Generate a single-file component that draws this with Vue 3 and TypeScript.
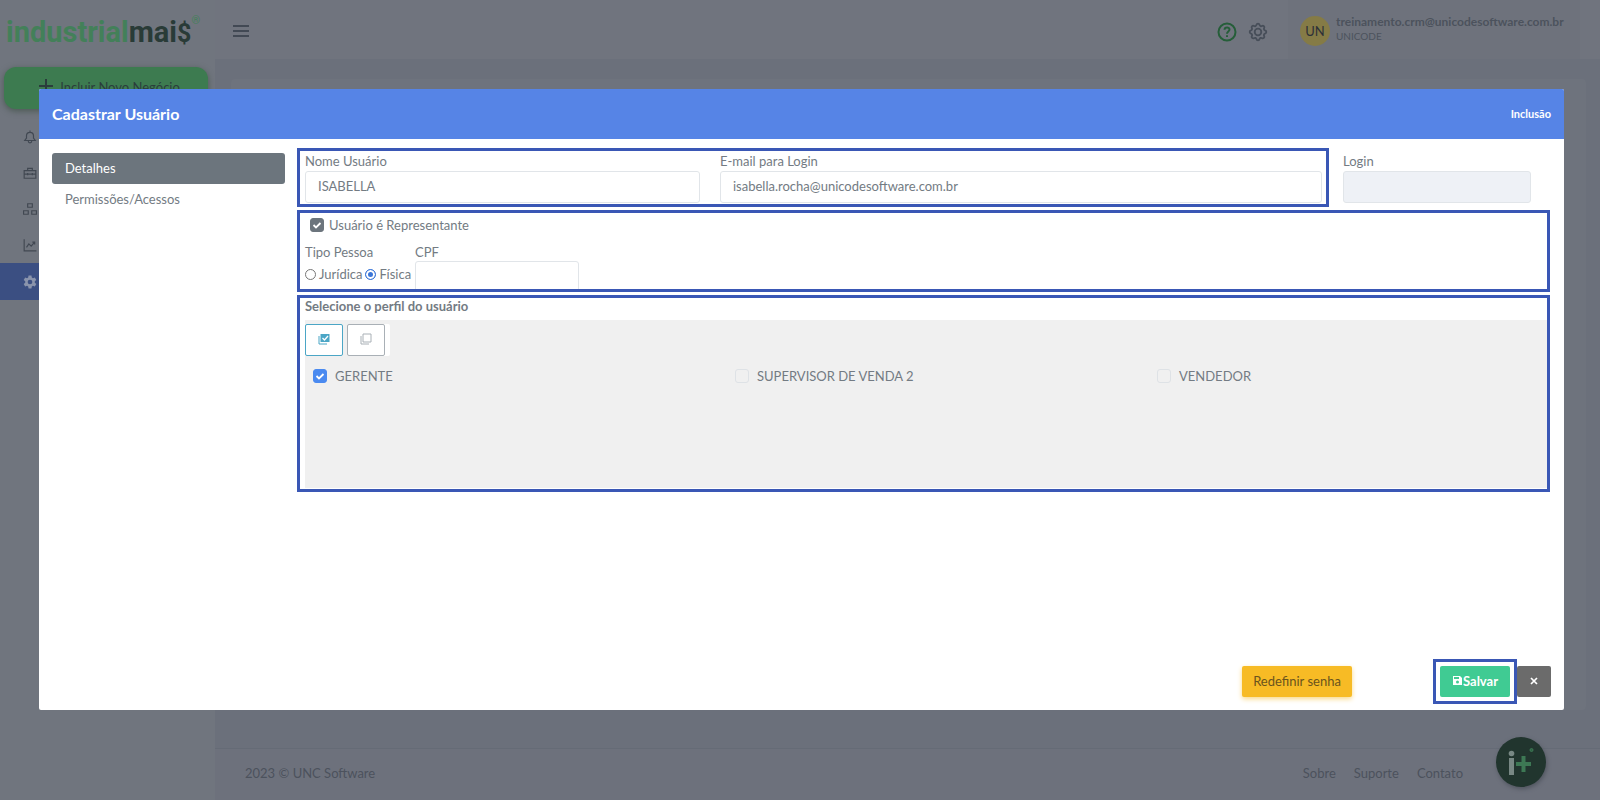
<script setup lang="ts">
import { ref } from 'vue'

interface Profile { name: string; checked: boolean }

const nome = ref('ISABELLA')
const email = ref('isabella.rocha@unicodesoftware.com.br')
const login = ref('')
const cpf = ref('')
const representante = ref(true)
const tipoPessoa = ref('fisica')
const profiles = ref<Profile[]>([
  { name: 'GERENTE', checked: true },
  { name: 'SUPERVISOR DE VENDA 2', checked: false },
  { name: 'VENDEDOR', checked: false },
])
const footerLinks = ['Sobre', 'Suporte', 'Contato']

function setAll(value: boolean) {
  profiles.value.forEach((p) => { p.checked = value })
}
</script>

<template>
  <div class="app">
    <aside class="sidebar">
      <a class="logo" href="#"><span class="logo-light">industrial</span><span class="logo-dark">mai<span class="logo-money">$</span></span><sup>®</sup></a>
      <button class="new-deal" type="button">
        <svg width="16" height="16" viewBox="0 0 16 16"><path d="M8 1v14M1 8h14" /></svg>
        <span>Incluir Novo Negócio</span>
      </button>
      <nav class="menu">
        <a href="#" aria-label="Notificações"><svg viewBox="0 0 24 24"><path d="M3 18h18l-3-4v-4a6 6 0 0 0-12 0v4zM12 4V1M9 19a3 3 0 0 0 6 0" /></svg></a>
        <a href="#" aria-label="Negócios"><svg viewBox="0 0 24 24"><path d="M2 8h20v13H2zM8 8V4h8v4M2 14h20M8 12v4M16 12v4" /></svg></a>
        <a href="#" aria-label="Organização"><svg viewBox="0 0 24 24"><path d="M8 3h8v6H8zM1 15h8v6H1zM15 15h8v6h-8z" /></svg></a>
        <a href="#" aria-label="Relatórios"><svg viewBox="0 0 24 24"><path d="M2 2v20h21M6 16l4-6 4 4 6-7M16 7h4v4" /></svg></a>
        <a href="#" class="active" aria-label="Configurações"><svg viewBox="0 0 24 24"><path class="solid" fill-rule="evenodd" d="M9.5 1h5l.6 3.3 2 1.2 3.2-1.2 2.5 4.4-2.6 2.1v2.4l2.6 2.1-2.5 4.4-3.2-1.2-2 1.2-.6 3.3h-5l-.6-3.3-2-1.2-3.2 1.2-2.5-4.4 2.6-2.1v-2.4L1.2 8.7l2.5-4.4 3.2 1.2 2-1.2zM12 8a4 4 0 1 0 0 8 4 4 0 0 0 0-8z" /></svg></a>
      </nav>
    </aside>

    <div class="page">
      <header class="topbar">
        <button class="icon-btn burger" type="button" aria-label="Menu">
          <svg width="16" height="12" viewBox="0 0 16 12"><path d="M0 1h16M0 6h16M0 11h16" /></svg>
        </button>
        <div class="top-actions">
          <button class="icon-btn help" type="button" aria-label="Ajuda">
            <svg width="20" height="20" viewBox="0 0 20 20"><circle cx="10" cy="10" r="8.5" /><path d="M7.5 7.8C7.6 4.6 12.6 4.7 12.5 7.6 12.5 9.5 10 9.5 10 11.7M10 13.3v1.7" /></svg>
          </button>
          <button class="icon-btn gear" type="button" aria-label="Configurações">
            <svg width="22" height="22" viewBox="0 0 24 24"><circle cx="12" cy="12" r="3.6" /><path d="M10.3 4.3c.4-1.8 3-1.8 3.4 0a1.7 1.7 0 0 0 2.6 1.1c1.5-.9 3.3.8 2.4 2.4a1.7 1.7 0 0 0 1 2.5c1.8.4 1.8 3 0 3.4a1.7 1.7 0 0 0-1 2.6c.9 1.5-.9 3.3-2.4 2.4a1.7 1.7 0 0 0-2.6 1c-.4 1.8-3 1.8-3.4 0a1.7 1.7 0 0 0-2.6-1c-1.5.9-3.3-.9-2.4-2.4a1.7 1.7 0 0 0-1-2.6c-1.8-.4-1.8-3 0-3.4a1.7 1.7 0 0 0 1-2.5c-.9-1.6.9-3.3 2.4-2.4a1.7 1.7 0 0 0 2.6-1.1z" /></svg>
          </button>
          <div class="account">
            <span class="avatar">UN</span>
            <div>
              <div class="account-mail">treinamento.crm@unicodesoftware.com.br</div>
              <div class="account-org">UNICODE</div>
            </div>
          </div>
        </div>
      </header>
      <main class="content"><div class="card"></div></main>
      <footer class="footer">
        <span>2023 © UNC Software</span>
        <nav><a v-for="l in footerLinks" :key="l" href="#">{{ l }}</a></nav>
      </footer>
    </div>

    <button class="chat" type="button" aria-label="Industrial Mais">
      <svg width="50" height="50" viewBox="0 0 50 50">
        <circle cx="15.5" cy="16.5" r="2.8" fill="#788884" />
        <path d="M13 21h5v17h-5z" fill="#788884" />
        <path d="M20 25h5.5v-6h4v6H35v4h-5.5v6h-4v-6H20z" fill="#3d7854" />
        <circle cx="35.5" cy="13" r="1.5" fill="#2f6044" stroke="#3d7854" />
      </svg>
    </button>

    <div class="overlay">
      <section class="modal" role="dialog" aria-labelledby="modal-title">
        <header class="modal-head">
          <h1 id="modal-title">Cadastrar Usuário</h1>
          <span>Inclusão</span>
        </header>
        <div class="modal-body">
          <nav class="tabs">
            <a href="#" class="current">Detalhes</a>
            <a href="#">Permissões/Acessos</a>
          </nav>
          <form class="form" @submit.prevent>
            <div class="top-row">
              <div class="frame identity">
                <div class="field">
                  <label for="nome">Nome Usuário</label>
                  <input id="nome" v-model="nome" type="text" />
                </div>
                <div class="field">
                  <label for="email">E-mail para Login</label>
                  <input id="email" v-model="email" type="text" />
                </div>
              </div>
              <div class="field login">
                <label for="login">Login</label>
                <input id="login" v-model="login" type="text" disabled />
              </div>
            </div>

            <div class="frame rep">
              <label class="check rep-check"><input v-model="representante" class="grey" type="checkbox" />Usuário é Representante</label>
              <div class="rep-row">
                <div class="field">
                  <span id="tipo">Tipo Pessoa</span>
                  <div class="radios" role="radiogroup" aria-labelledby="tipo">
                    <label><input v-model="tipoPessoa" type="radio" value="juridica" />Jurídica</label>
                    <label><input v-model="tipoPessoa" type="radio" value="fisica" />Física</label>
                  </div>
                </div>
                <div class="field cpf">
                  <label for="cpf">CPF</label>
                  <input id="cpf" v-model="cpf" type="text" />
                </div>
              </div>
            </div>

            <div class="frame profile">
              <h2>Selecione o perfil do usuário</h2>
              <div class="profile-box">
                <div class="toolbar">
                  <button class="all" type="button" aria-label="Marcar todos" @click="setAll(true)">
                    <svg width="12" height="12" viewBox="0 0 12 12"><path d="M1 3v8h8" fill="none" stroke="currentColor" /><path d="M2.5 1h9v8h-9z" fill="currentColor" /><path d="M4.5 5l2 2 3.5-4" fill="none" stroke="#fff" stroke-width="1.3" /></svg>
                  </button>
                  <button class="none" type="button" aria-label="Desmarcar todos" @click="setAll(false)">
                    <svg width="12" height="12" viewBox="0 0 12 12" fill="none" stroke="currentColor"><path d="M1 3v8h8M3 1h8v8H3z" /></svg>
                  </button>
                </div>
                <div class="profiles">
                  <label v-for="p in profiles" :key="p.name" class="check"><input v-model="p.checked" type="checkbox" />{{ p.name }}</label>
                </div>
              </div>
            </div>
          </form>
        </div>
        <footer class="modal-foot">
          <button class="reset" type="button">Redefinir senha</button>
          <div class="save-frame">
            <button class="save" type="button">
              <svg width="11" height="11" viewBox="0 0 11 11"><path fill="#fff" fill-rule="evenodd" d="M1 1h7l2 2v7H1zM2 2v2h5V2zM5.5 5.500a1.500 1.500 0 1 0 0 3 1.500 1.500 0 0 0 0-3z" /></svg>Salvar
            </button>
          </div>
          <button class="close" type="button" aria-label="Fechar">
            <svg width="8" height="8" viewBox="0 0 8 8"><path d="M1 1l6 6M7 1L1 7" stroke="#fff" stroke-width="1.7" /></svg>
          </button>
        </footer>
      </section>
    </div>
  </div>
</template>

<style>
body { margin: 0; background: #6d717c; }
</style>

<style scoped>
* { box-sizing: border-box; }
.app {
  position: relative;
  display: flex;
  min-height: 100vh;
  font-family: Lato, "Open Sans", sans-serif;
  font-size: 13px;
  line-height: 18px;
  color: #737b83;
}
button, input { font: inherit; color: inherit; }
button { padding: 0; cursor: pointer; }
a { color: inherit; text-decoration: none; }
h1, h2 { margin: 0; }

.sidebar { width: 215px; flex: none; background: #70757e; }
.logo { display: flex; height: 59px; padding: 4px 0 0 6px; align-items: center; font: bold 29px Roboto, sans-serif; }
.logo-light { color: #438059; }
.logo-dark { color: #293b37; }
.logo-money { font-size: 25px; }
.logo sup { align-self: flex-start; padding-top: 10px; font-size: 11px; font-weight: 400; color: #438059; }
.new-deal {
  display: flex; justify-content: center; align-items: flex-start; gap: 6px;
  width: 204px; height: 42px; margin: 8px 0 0 4px; padding: 11px 0 0 6px;
  border: 0; border-radius: 12px; background: #3d7b50; color: #2b3d3c;
  box-shadow: 0 2px 6px #4b5953;
}
.new-deal svg { fill: none; stroke: currentColor; stroke-width: 2; }
.menu { display: flex; flex-direction: column; margin-top: 10px; }
.menu a { display: flex; align-items: center; height: 36px; padding-left: 23px; color: #414852; }
.menu svg { width: 14px; height: 14px; fill: none; stroke: currentColor; stroke-width: 2; }
.menu .solid { fill: currentColor; stroke: none; }
.menu .active { height: 37px; background: #3b4f82; color: #8a94ac; }

.page { display: flex; flex-direction: column; flex: 1; min-width: 0; background: #6b707b; }
.topbar { display: flex; justify-content: space-between; height: 59px; padding: 0 20px 0 18px; background: #70747e; }
.icon-btn { display: flex; align-items: center; border: 0; background: none; }
.icon-btn svg { fill: none; stroke: currentColor; stroke-width: 2; }
.burger { color: #333b47; padding-top: 2px; }
.burger svg { stroke-width: 1.5; }
.top-actions { display: flex; align-items: stretch; gap: 10px; }
.help { color: #255e39; padding-top: 4px; }
.gear { color: #474e59; padding-top: 5px; }
.icon-btn.gear svg { stroke-width: 2; }
.account { display: flex; align-items: center; gap: 6px; width: 292px; margin-left: 9px; padding: 2px 0 0 12px; background: #6e727c; color: #4c525d; }
.avatar { display: flex; align-items: center; justify-content: center; width: 30px; height: 30px; border-radius: 50%; background: #857b46; color: #2d3037; }
.account > div { padding-bottom: 5px; }
.account-mail { font-size: 12px; line-height: 16px; font-weight: 700; }
.account-org { font-size: 10px; line-height: 12px; }
.content { display: flex; flex: 1; padding: 20px 14px 38px 16px; }
.card { flex: 1; background: #6e737d; border-radius: 4px; }
.footer { display: flex; justify-content: space-between; align-items: center; height: 52px; padding: 0 137px 4px 30px; border-top: 1px solid #656b76; background: #6d717c; color: #4c525d; }
.footer nav { display: flex; gap: 18px; }

.chat { position: absolute; right: 54px; bottom: 13px; width: 50px; height: 50px; border: 0; border-radius: 50%; background: #21352e; box-shadow: 1px 2px 4px #50555f; }

.overlay { position: absolute; inset: 0; display: flex; padding: 89px 36px 90px 39px; pointer-events: none; }
.modal { display: flex; flex-direction: column; flex: 1; min-width: 0; background: #fff; border-radius: 2px; overflow: hidden; pointer-events: auto; }
.modal-head { display: flex; align-items: center; justify-content: space-between; height: 50px; padding: 0 13px; background: #5684e6; color: #fff; font-size: 11px; font-weight: 700; }
.modal-head h1 { font-size: 16px; }
.modal-body { display: flex; flex: 1; gap: 12px; padding: 9px 14px 0 13px; }
.tabs { width: 233px; flex: none; padding-top: 5px; }
.tabs a { display: flex; align-items: center; height: 31px; padding: 0 13px 2px; border-radius: 3px; }
.tabs .current { background: #6c757d; color: #fff; }
.form { flex: 1; min-width: 0; display: flex; flex-direction: column; gap: 3px; }
.top-row { display: flex; }
.frame { border: 3px solid #3a57b5; padding: 0 5px; }
.identity { display: grid; grid-template-columns: 395fr 602fr; gap: 20px; height: 59px; flex: 1; padding: 1px 4px 0 5px; }
.field { display: flex; flex-direction: column; gap: 1px; min-width: 0; }
.field input[type="text"] { width: 100%; height: 32px; padding: 0 12px 2px; border: 1px solid #e1e5e9; border-radius: 3px; background: #fff; }
.field input:disabled { background: #eef1f6; }
.login { width: 188px; margin: 4px 19px 0 14px; }
.rep { height: 82px; overflow: hidden; }
.check { display: flex; align-items: center; }
.check input, .radios input { appearance: none; flex: none; margin: 0; border: 1px solid #dee2e6; background: transparent center / 10px no-repeat; }
.check input { width: 14px; height: 14px; margin-right: 8px; border-radius: 3px; }
.check input:checked { border-color: #4a8af0; background-color: #4a8af0; background-image: url("data:image/svg+xml,%3Csvg xmlns='http://www.w3.org/2000/svg' viewBox='0 0 10 10'%3E%3Cpath d='M1.5 5l2.5 2.5L8.5 3' fill='none' stroke='white' stroke-width='1.8'/%3E%3C/svg%3E"); }
.check input.grey:checked { border-color: #6c757d; background-color: #6c757d; }
.check input.grey { margin-right: 5px; }
.rep-check { height: 24px; padding-left: 5px; }
.rep-row { display: flex; margin-top: 6px; }
.rep-row .field:first-child { width: 110px; flex: none; gap: 4px; }
.rep-row .cpf { width: 164px; gap: 0; }
.radios { display: flex; gap: 3px; white-space: nowrap; }
.radios label { display: flex; align-items: center; gap: 3px; }
.radios input { width: 11px; height: 11px; border-color: #777; border-radius: 50%; }
.radios input:checked { border-color: #3b76d8; background: #3b76d8; box-shadow: inset 0 0 0 2px #fff; }
.profile { height: 197px; padding-right: 0; }
.profile h2 { height: 22px; font-size: 13px; line-height: 16px; font-weight: 700; }
.profile-box { height: 168px; background: #f0f0f0; }
.toolbar { display: flex; gap: 4px; width: 84px; padding-top: 4px; }
.toolbar button { display: flex; align-items: center; justify-content: center; width: 38px; height: 32px; padding-bottom: 2px; border: 1px solid; border-radius: 2px; background: #fff; }
.toolbar .all { color: #4ba6c6; }
.toolbar .none { color: #a9b0b6; box-shadow: 5px 0 #fff; }
.profiles { display: grid; grid-template-columns: 422fr 422fr 390fr; padding: 11px 0 0 8px; }
.modal-foot { display: flex; align-items: center; height: 58px; padding: 0 13px 0 0; justify-content: flex-end; }
.modal-foot button { display: flex; align-items: center; justify-content: center; height: 31px; padding-bottom: 1px; border: 0; border-radius: 2px; }
.modal-foot .reset { width: 110px; margin-right: 81px; background: #f7bb25; color: #6a541d; box-shadow: 0 2px 5px #f9d987; }
.save-frame { padding: 4px; border: 3px solid #3a57b5; }
.modal-foot .save { width: 70px; background: #40cb93; color: #fff; font-weight: 700; }
.modal-foot .close { width: 34px; background: #6b6b6b; }
</style>
